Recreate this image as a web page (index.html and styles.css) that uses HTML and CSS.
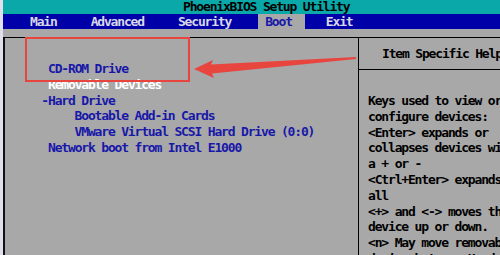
FILE: index.html
```html
<!DOCTYPE html>
<html>
  <head>
    <meta charset="utf-8">
    <meta name="viewport" content="width=device-width, initial-scale=1">
    <title>PhoenixBIOS Setup Utility</title>
    <link rel="stylesheet" href="styles.css">
  </head>
  <body>
    <div class="screen">
      <div class="title">PhoenixBIOS Setup Utility</div>
      <nav class="menu">
        <span class="tab">Main</span>
        <span class="tab">Advanced</span>
        <span class="tab">Security</span>
        <span class="tab active">Boot</span>
        <span class="tab">Exit</span>
      </nav>
      <section class="panel">
        <div class="list">
          <div class="item">CD-ROM Drive</div>
          <div class="item white">Removable Devices</div>
          <div class="item group">-Hard Drive</div>
          <div class="item sub">Bootable Add-in Cards</div>
          <div class="item sub">VMware Virtual SCSI Hard Drive (0:0)</div>
          <div class="item">Network boot from Intel E1000</div>
        </div>
        <div class="help">
          <div class="help-head">Item Specific Help</div>
          <div class="help-body">
            <div>Keys used to view or</div>
            <div>configure devices:</div>
            <div>&lt;Enter&gt; expands or</div>
            <div>collapses devices with</div>
            <div>a + or -</div>
            <div>&lt;Ctrl+Enter&gt; expands</div>
            <div>all</div>
            <div>&lt;+&gt; and &lt;-&gt; moves the</div>
            <div>device up or down.</div>
            <div>&lt;n&gt; May move removable</div>
            <div>device between Hard</div>
          </div>
        </div>
      </section>
      <!-- annotation drawn over the screenshot -->
      <svg class="mark" width="497" height="255" viewBox="0 0 497 255">
        <rect x="23" y="38" width="163" height="43" fill="none" stroke="#e8453f" stroke-width="2"/>
        <polygon points="191,69 210,60 208,64.5 353,57 353,59 209,73.5 211,78" fill="#e8453f"/>
      </svg>
    </div>
  </body>
</html>
```

FILE: styles.css
```css
body {
  margin: 0;
  background: #dfe0ec;
  overflow: hidden;
}
.screen {
  position: relative;
  margin-left: 3px;
  height: 255px;
  overflow: hidden;
  background: #a8a8a8;
  font-family: "DejaVu Sans Mono", monospace;
  font-size: 13px;
  font-weight: bold;
  letter-spacing: -1.17px;
  white-space: nowrap;
}
.title {
  height: 14px;
  line-height: 14px;
  padding-left: 180px;
  background: #0aa8a8;
  color: #000;
}
.menu {
  display: flex;
  gap: 20px;
  height: 15px;
  line-height: 15px;
  padding-left: 20px;
  background: #0000a8;
  color: #d8d8e8;
}
.tab {
  padding: 0 7px;
}
.active {
  padding-right: 13px;
  margin-right: -6px;
  background: #a8a8a8;
  color: #1818a8;
}
.panel {
  display: flex;
  margin-top: 8px;
  height: 218px;
  border-top: 1px solid #000;
}
.list {
  flex: 0 0 355px;
  box-sizing: border-box;
  padding: 23px 0 0 43px;
  border-left: 2px solid #111;
  color: #1818a8;
  line-height: 15.8px;
}
.white {
  color: #fff;
}
.group {
  margin-left: -6.66px;
}
.sub {
  padding-left: 26.6px;
}
.help {
  flex: 1;
  border-left: 1px solid #000;
  color: #000;
  overflow: hidden;
}
.help-head {
  height: 31px;
  line-height: 31px;
  padding-left: 23px;
  border-bottom: 1px solid #000;
}
.help-body {
  padding: 23px 0 0 9px;
  line-height: 15.8px;
}
.mark {
  position: absolute;
  left: 0;
  top: 0;
}
```
